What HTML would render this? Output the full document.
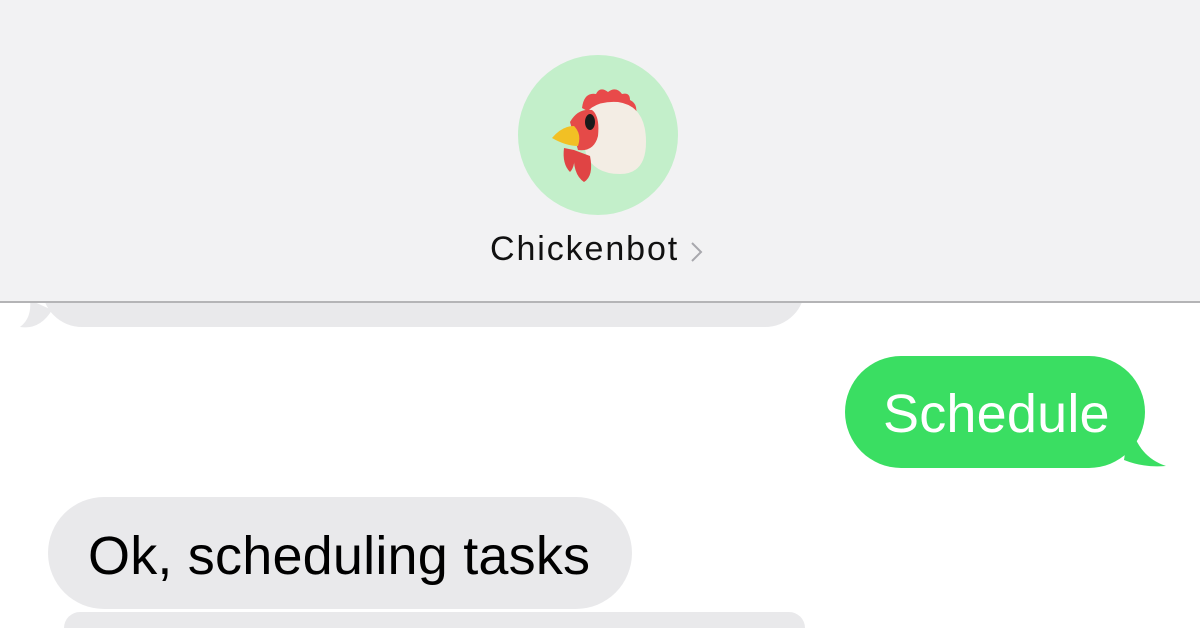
<!DOCTYPE html>
<html><head><style>
html,body{margin:0;width:1200px;height:628px;overflow:hidden}
body{background:#fff;font-family:"Liberation Sans",sans-serif;position:relative}
.hdr{position:absolute;left:0;top:0;width:1200px;height:301px;background:#f2f2f3;border-bottom:2px solid #b4b4b6}
.b{position:absolute;border-radius:56px}
.g{background:#e9e9eb}
.t{position:absolute;font-size:54px;color:#000;letter-spacing:0.2px}
</style></head><body>
<div class="b g" style="left:42px;top:230px;width:763px;height:97px;border-radius:40px"></div>
<svg style="position:absolute;left:0;top:280px" width="120" height="60"><path d="M30 20 Q32 38 20 47 Q40 50 52 30 Z" fill="#e9e9eb"/></svg>
<div class="hdr"></div>
<div style="position:absolute;left:518px;top:55px;width:160px;height:160px;border-radius:50%;background:#c3efca"></div>
<svg style="position:absolute;left:540px;top:80px" width="120" height="110">
<path d="M42 28 Q44 12 56 14 Q60 6 68 12 Q76 6 82 14 Q90 12 90 20 Q98 24 96 34 L60 38 Z" fill="#e84a4a"/>
<path d="M40 44 Q48 20 78 22 Q106 26 106 62 Q106 94 80 94 Q54 94 46 74 Z" fill="#f3ede4"/>
<path d="M30 42 Q38 28 52 30 Q60 36 58 56 Q54 72 38 70 Z" fill="#e54a48"/>
<ellipse cx="50" cy="42" rx="5" ry="8" fill="#1a1a1a"/>
<path d="M12 58 Q22 46 34 46 Q42 54 38 66 Q26 66 12 58 Z" fill="#f2c024"/>
<path d="M24 68 Q22 84 30 92 Q36 86 34 70 Z" fill="#e04444"/>
<path d="M34 70 Q32 94 44 102 Q54 96 50 76 Z" fill="#e04444"/>
</svg>
<div style="position:absolute;left:490px;top:230px;font-size:34px;color:#111;letter-spacing:1.9px">Chickenbot</div>
<svg style="position:absolute;left:689px;top:240px" width="16" height="24"><path d="M3 3 L12 12 L3 21" stroke="#a8a8ad" stroke-width="2" fill="none"/></svg>
<div class="b" style="left:845px;top:356px;width:300px;height:112px;background:#3ade62"></div>
<svg style="position:absolute;left:1110px;top:420px" width="60" height="50"><path d="M20 0 Q26 36 56 46 Q34 48 14 40 Z" fill="#3ade62"/></svg>
<div class="t" style="left:883px;top:383px;color:#fff">Schedule</div>
<div class="b g" style="left:48px;top:497px;width:584px;height:112px"></div>
<div class="t" style="left:88px;top:525px">Ok, scheduling tasks</div>
<div class="g" style="position:absolute;left:64px;top:612px;width:741px;height:16px;border-radius:56px 56px 0 0"></div>
</body></html>
